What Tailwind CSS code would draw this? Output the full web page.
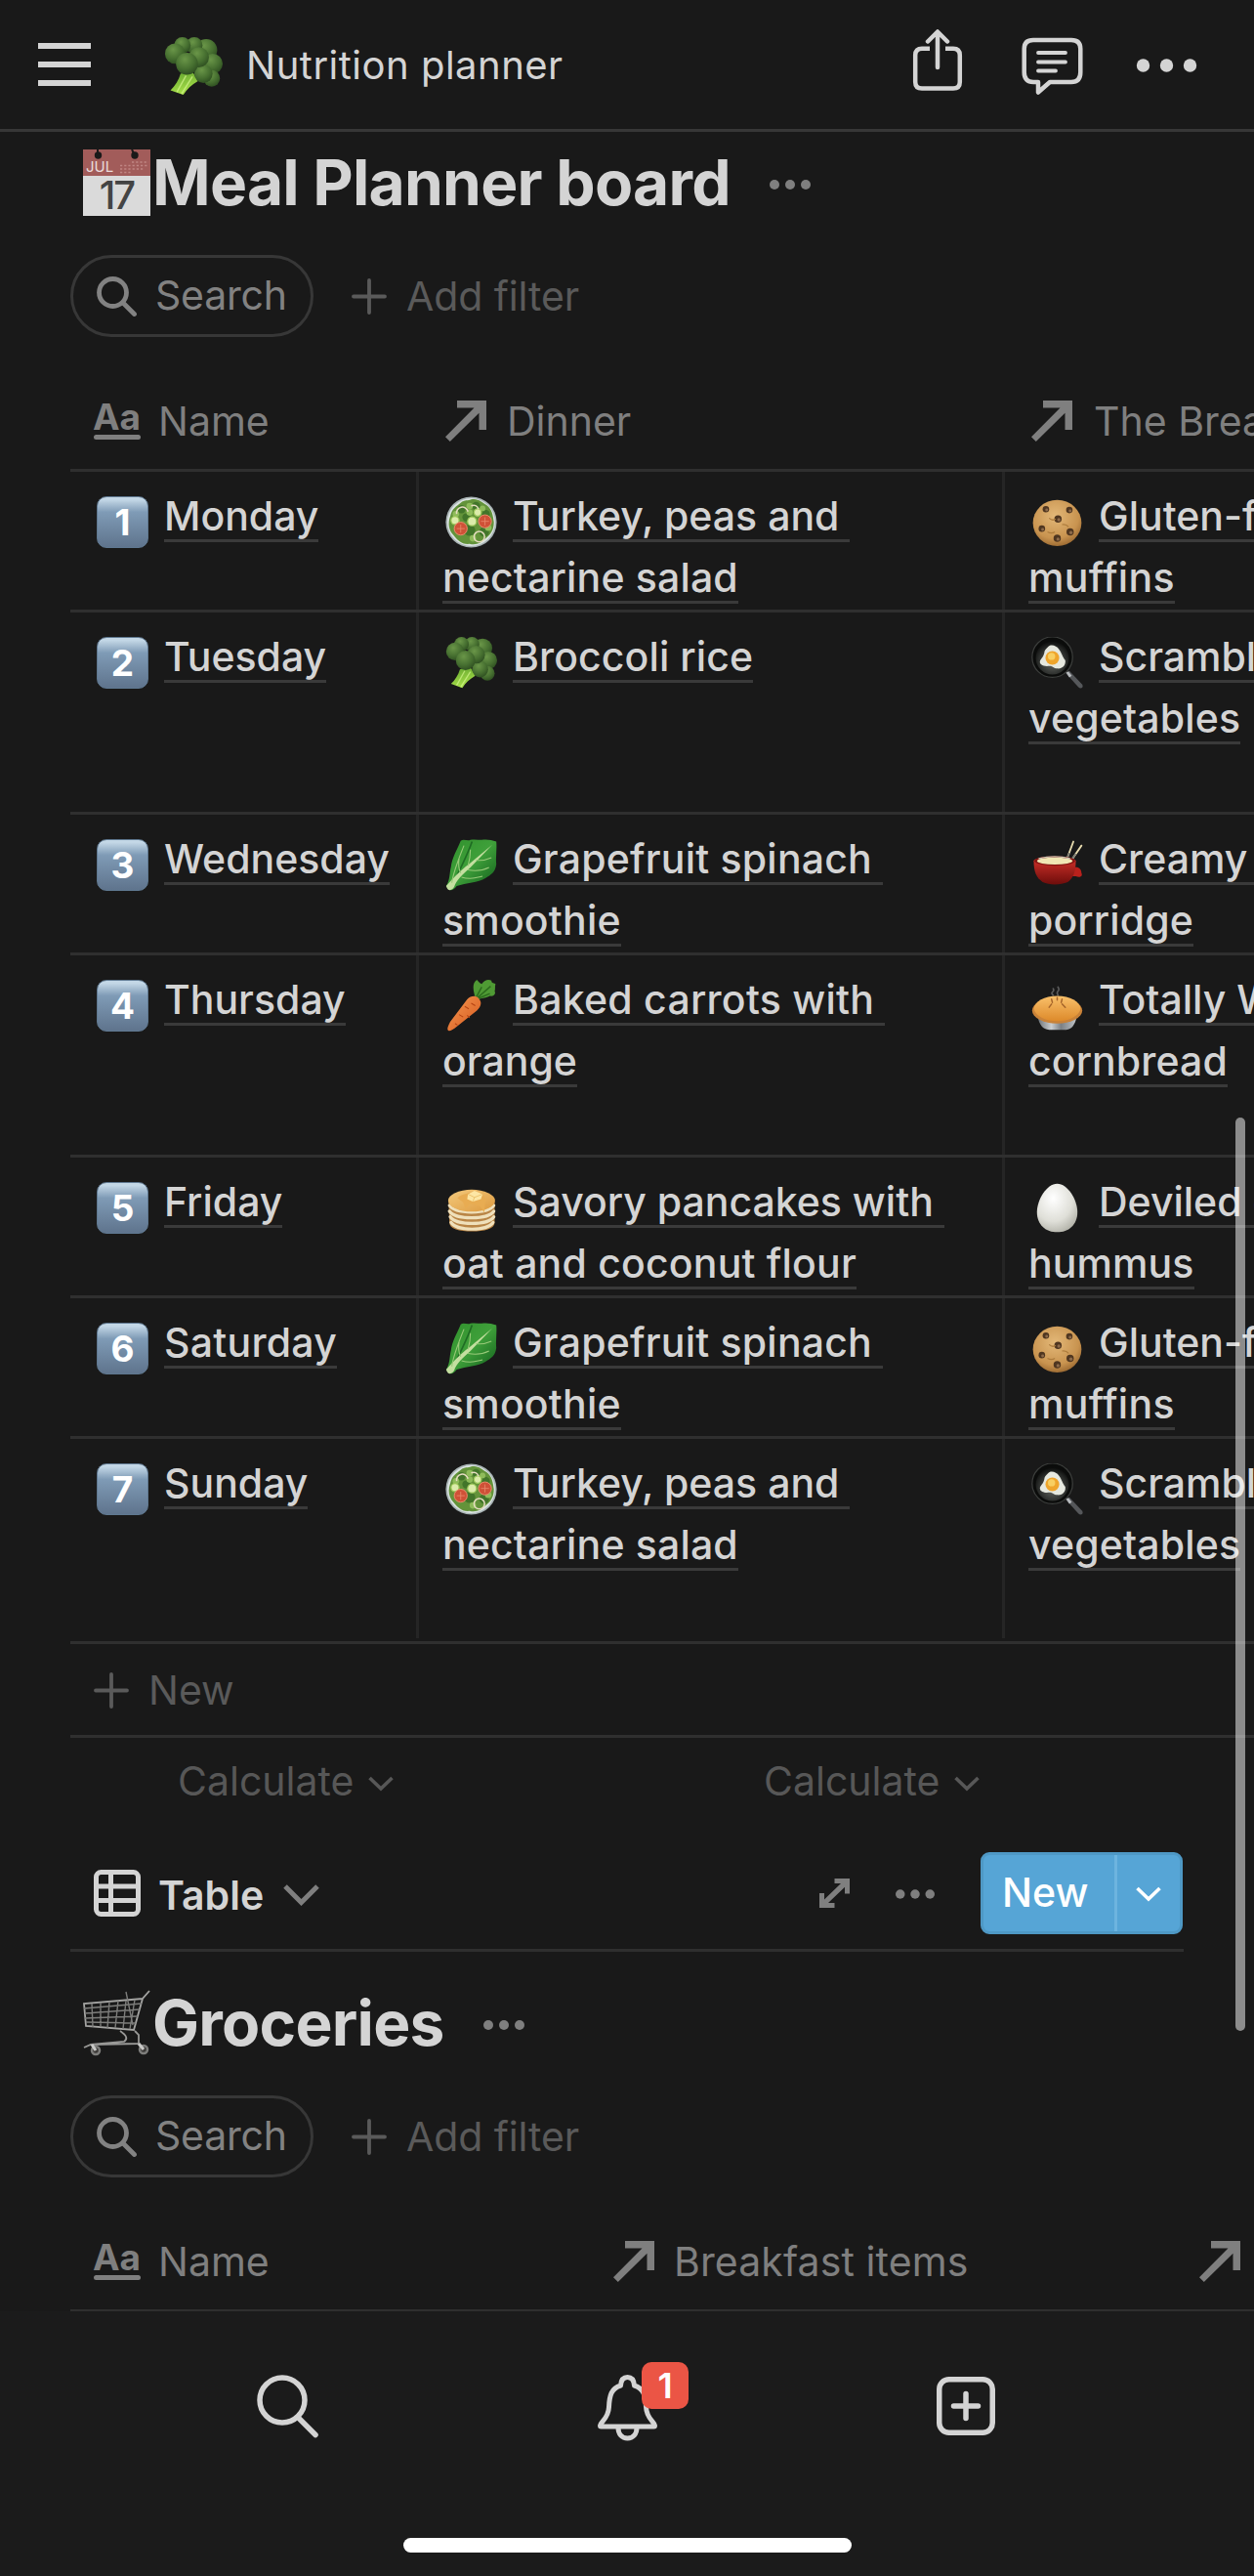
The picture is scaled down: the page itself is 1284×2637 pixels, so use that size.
<!DOCTYPE html>
<html lang="en">
<head>
<meta charset="utf-8">
<meta name="viewport" content="width=device-width, initial-scale=1">
<title>Nutrition planner</title>
<script src="https://cdn.jsdelivr.net/npm/@tailwindcss/browser@4"></script>
</head>
<body class="bg-[#191919] text-[#d4d4d4] font-['Inter',sans-serif]">

<!-- Shared icons -->
<svg class="absolute size-0" xmlns="http://www.w3.org/2000/svg">
  <defs>
    <linearGradient id="stalk" x1="0" y1="0" x2="0.3" y2="1"><stop offset="0" stop-color="#5b9e2a"/><stop offset="1" stop-color="#a8e04a"/></linearGradient>
    <radialGradient id="floret" cx="0.4" cy="0.3" r="0.75"><stop offset="0" stop-color="#6a9648"/><stop offset="0.6" stop-color="#466f30"/><stop offset="1" stop-color="#2d4d20"/></radialGradient>
    <linearGradient id="leaf" x1="0" y1="0" x2="1" y2="1"><stop offset="0" stop-color="#2f8f2c"/><stop offset="0.5" stop-color="#3fa03a"/><stop offset="1" stop-color="#0e5a1a"/></linearGradient>
    <linearGradient id="carrotBody" x1="0" y1="0" x2="1" y2="1"><stop offset="0" stop-color="#f79a52"/><stop offset="1" stop-color="#d4561c"/></linearGradient>
    <radialGradient id="cookieBody" cx="0.45" cy="0.35" r="0.7"><stop offset="0" stop-color="#e3b878"/><stop offset="0.7" stop-color="#c8934f"/><stop offset="1" stop-color="#93622c"/></radialGradient>
    <radialGradient id="eggBody" cx="0.4" cy="0.3" r="0.8"><stop offset="0" stop-color="#ffffff"/><stop offset="0.6" stop-color="#dfdfd8"/><stop offset="1" stop-color="#a9a99f"/></radialGradient>
    <radialGradient id="panBody" cx="0.5" cy="0.6" r="0.6"><stop offset="0" stop-color="#6a6d68"/><stop offset="0.7" stop-color="#2b2d2b"/><stop offset="1" stop-color="#0c0d0c"/></radialGradient>
    <linearGradient id="potBody" x1="0" y1="0" x2="0" y2="1"><stop offset="0" stop-color="#d5332b"/><stop offset="1" stop-color="#6d0d0b"/></linearGradient>
    <linearGradient id="pieTop" x1="0" y1="0" x2="0" y2="1"><stop offset="0" stop-color="#f9c06a"/><stop offset="1" stop-color="#dd8a2b"/></linearGradient>
    <linearGradient id="tin" x1="0" y1="0" x2="1" y2="0"><stop offset="0" stop-color="#6d7276"/><stop offset="0.35" stop-color="#c9cdd0"/><stop offset="0.6" stop-color="#7b8085"/><stop offset="1" stop-color="#c0c4c7"/></linearGradient>
    <linearGradient id="cake" x1="0" y1="0" x2="1" y2="1"><stop offset="0" stop-color="#f3c97c"/><stop offset="1" stop-color="#dd9a3f"/></linearGradient>
  </defs>

  <symbol id="broccoli" viewBox="0 0 64 64">
    <path d="M18 40 L30 36 L37 48 C30 52 25 57 21 63 L7 58 C12 53 16 47 18 40Z" fill="url(#stalk)"/>
    <path d="M24 42 L14 60 M31 43 L19 62" stroke="#d3f58c" stroke-width="1.6" fill="none" opacity=".7"/>
    <g fill="url(#floret)">
      <circle cx="46" cy="14" r="12"/><circle cx="33" cy="9" r="9"/><circle cx="20" cy="9" r="9"/><circle cx="12" cy="18" r="11"/>
      <circle cx="53" cy="29" r="11"/><circle cx="52" cy="45" r="9"/><circle cx="43" cy="40" r="10"/><circle cx="38" cy="22" r="11"/><circle cx="25" cy="29" r="12"/>
    </g>
  </symbol>

  <symbol id="salad" viewBox="0 0 64 64">
    <circle cx="32" cy="32" r="31.5" fill="#a9b4b5"/><circle cx="32" cy="32" r="29.500" fill="#dbe3e2"/>
    <path d="M32 4 C40 2 46 8 51 11 C58 16 59 25 60 32 C60 42 56 47 50 52 C44 58 38 61 30 59 C20 60 15 54 10 48 C4 42 3 33 6 25 C8 15 14 12 19 8 C24 4 28 6 32 4Z" fill="#63933a"/>
    <g fill="#42752a"><circle cx="20" cy="16" r="5"/><circle cx="38" cy="12" r="5"/><circle cx="50" cy="22" r="5"/><circle cx="30" cy="42" r="7"/><circle cx="48" cy="44" r="6"/><circle cx="26" cy="26" r="5"/></g>
    <g fill="#8fbc5b"><circle cx="30" cy="12" r="4"/><circle cx="46" cy="15" r="3.500"/><circle cx="13" cy="22" r="4"/><circle cx="34" cy="52" r="4"/><circle cx="53" cy="39" r="4"/><circle cx="30" cy="20" r="4"/></g>
    <g fill="#dcecab" stroke="#9cc75a" stroke-width="1.500"><circle cx="12" cy="30" r="5"/><circle cx="33" cy="31" r="5.500"/><circle cx="40" cy="20" r="4.500"/></g>
    <g fill="#cf5137" stroke="#e98a6c" stroke-width="1.200"><circle cx="19" cy="40" r="8"/><circle cx="49" cy="31" r="8"/></g>
    <path d="M19 35v10M14 40h10M49 26v10M44 31h10" stroke="#e98a6c" stroke-width="1"/>
    <g fill="none" stroke="#e6dcc0" stroke-width="1.800"><circle cx="42" cy="50" r="6.500"/><path d="M14 22a7 7 0 0 1 14-3M32 12a6 6 0 0 1 9 4"/></g>
  </symbol>

  <symbol id="lettuce" viewBox="0 0 64 64">
    <path d="M1 58 C6 50 5 42 7 34 C8 24 14 14 19 2 C23 -1 27 3 31 1 C36 0 40 1 45 1 C51 0 57 1 63 3 C64 13 62 22 63 31 C62 41 56 44 50 48 C40 54 26 54 14 58 C11 62 7 65 4 62Z" fill="url(#leaf)"/>
    <path d="M33 3 C29 15 21 32 9 56" stroke="#0d4d18" stroke-width="2" fill="none" opacity=".6"/>
    <path d="M1 58 C9 49 19 38 29 31 L58 7 L31 35 C22 43 13 51 11 59 C8 64 3 65 1 58Z" fill="#c4dfa0"/>
    <path d="M8 54 C10 40 16 26 23 8 M19 42 C16 36 16 30 17 24 M28 33 C30 26 31 20 31 13 M38 26 C44 27 50 26 57 23 M28 38 C38 40 46 39 54 35 M20 47 C30 50 38 48 46 46" stroke="#98c978" stroke-width="1.300" fill="none"/>
  </symbol>

  <symbol id="carrot" viewBox="0 0 64 64">
    <path d="M37 22 C34 12 33 4 39 0 C42 3 43 5 45 5 C49 0 53 -1 57 1 C57 4 59 4 62 5 C61 9 62 12 61 14 C63 18 59 21 55 20 C50 23 46 22 42 24Z" fill="#4f9a34"/>
    <path d="M38 22 L45 9 M40 22 L56 8 M41 23 L55 17" stroke="#2c6b1d" stroke-width="1.800" fill="none"/>
    <path d="M27 24 C32 19 39 19 42 24 C46 29 43 34 39 38 L14 58 C9 62 4 65 3 62 C2 60 4 56 6 52Z" fill="url(#carrotBody)"/>
    <path d="M24 33l5 3M17 43l5 3M30 47l-3-3M37 32l-5-3M12 54l3 2" stroke="#b64413" stroke-width="1.300" fill="none"/>
  </symbol>

  <symbol id="pancakes" viewBox="0 0 64 64">
    <path d="M4 24 H61 V50 C61 58 48 61 33 61 C17 61 5 58 5 50Z" fill="#b98546"/>
    <g fill="none" stroke="#efe0bb" stroke-width="3.800" stroke-linecap="round"><path d="M5 29 C12 40 53 40 60 29"/><path d="M5 36 C12 47 53 47 60 36"/><path d="M6 43 C13 54 53 54 60 43"/><path d="M7 50 C14 61 52 61 59 50"/></g>
    <ellipse cx="32.500" cy="23" rx="29" ry="13.500" fill="url(#cake)"/>
    <path d="M15 20 C20 14 25 16 30 13 L44 14 C48 18 52 22 49 26 L48 38 L43 30 L31 27 L25 33 L22 25Z" fill="#e8ac52"/>
    <path d="M28 15 L36 11 L46 15 L44 21 L34 24 L27 21Z" fill="#fde6a4"/><path d="M28 15 L36 19 L46 15 M36 19 L34 24" stroke="#e9bd64" stroke-width="1" fill="none"/>
  </symbol>

  <symbol id="cookie" viewBox="0 0 64 64">
    <ellipse cx="32" cy="33" rx="30" ry="28.500" fill="url(#cookieBody)"/>
    <g fill="#4f3620"><circle cx="18" cy="16" r="4"/><circle cx="47" cy="17" r="4"/><circle cx="33" cy="28" r="4.500"/><circle cx="13" cy="40" r="4"/><circle cx="48" cy="44" r="4.500"/><circle cx="32" cy="52" r="4.500"/></g>
    <g fill="#8d6a4a"><circle cx="19" cy="17" r="1.800"/><circle cx="48" cy="18" r="1.800"/><circle cx="34" cy="29" r="2"/><circle cx="14" cy="41" r="1.800"/><circle cx="49" cy="45" r="2"/><circle cx="33" cy="53" r="2"/></g>
    <path d="M22 27q4 4 8 1M38 35q5-1 8 3M20 44q5 3 9 0" stroke="#ad7c3d" stroke-width="1.500" fill="none"/>
  </symbol>

  <symbol id="pan" viewBox="0 0 64 64">
    <path d="M42 44 L47 42 L63 59 C65 63 61 65 58 62 Z" fill="#55575a"/><path d="M43 44l3-1 4 5-3 2z" fill="#b9bcbf"/>
    <circle cx="26" cy="25" r="25" fill="#0b0c0b" stroke="#3c3e3c" stroke-width="1.500"/><circle cx="26" cy="26" r="20.500" fill="url(#panBody)"/>
    <path d="M20 13 C24 8 31 11 34 15 C38 20 38 24 42 29 C43 36 37 40 32 39 C27 39 26 35 22 36 C15 37 9 34 11 29 C14 25 15 24 16 20 C16 17 18 15 20 13Z" fill="#e6e8df"/>
    <circle cx="26" cy="26" r="8.500" fill="#efa52c"/><circle cx="25" cy="24" r="4.500" fill="#f8cf62"/>
  </symbol>

  <symbol id="fondue" viewBox="0 0 64 64">
    <path d="M42 30 L52 3 M47 30 L62 8" stroke="#e8dcae" stroke-width="2.200" stroke-linecap="round"/><path d="M42 29 L47 17 M47 29 L55 18" stroke="#7b7b74" stroke-width="2"/>
    <path d="M50 37 C56 32 62 36 62 42 C64 46 60 48 55 46 L47 46Z" fill="#b9211c"/>
    <path d="M3 27 C3 20 54 20 55 27 C55 42 51 49 45 53 C36 57 22 57 14 53 C6 48 3 40 3 27Z" fill="url(#potBody)"/>
    <ellipse cx="29" cy="27" rx="25" ry="6" fill="#851512"/><ellipse cx="29" cy="27" rx="22" ry="4.500" fill="#f1e7b4"/><path d="M9 24 Q29 19 48 24" stroke="#c9c3b0" stroke-width="1.500" fill="none"/>
  </symbol>

  <symbol id="pie" viewBox="0 0 64 64">
    <path d="M27 19 C22 15 30 15 27 11 M33 19 C29 13 37 15 33 9" stroke="#6c6c6c" stroke-width="2" fill="none" stroke-linecap="round" opacity=".8"/>
    <path d="M8 46 H56 C54 56 50 61 43 62 H22 C14 61 10 56 8 46Z" fill="url(#tin)"/>
    <ellipse cx="32" cy="38" rx="31" ry="16" fill="#c98238"/>
    <path d="M3 36 C4 27 16 20 32 20 C48 20 60 27 61 36 C58 46 46 51 32 51 C18 51 6 46 3 36Z" fill="url(#pieTop)"/>
    <path d="M25 24l1 4M38 24l-1 4M22 34l3-4M42 34l-4-4M32 22v3" stroke="#a5642a" stroke-width="1.800" stroke-linecap="round"/>
  </symbol>

  <symbol id="egg" viewBox="0 0 64 64">
    <path d="M32 2 C45 2 57 22 57 37 C57 53 46 62 32 62 C18 62 7 53 7 37 C7 22 19 2 32 2Z" fill="url(#eggBody)"/>
  </symbol>

  <symbol id="relation" viewBox="0 0 42 42">
    <path d="M12 0 H42 V30 H34.500 V12.800 L4.800 42 L0 37.200 L29.500 7.500 H12Z" fill="currentColor"/>
  </symbol>
  <symbol id="chevron" viewBox="0 0 26 16">
    <path d="M1.500 2 L13 13 L24.500 2" fill="none" stroke="currentColor" stroke-width="3.600"/>
  </symbol>
  <symbol id="plus" viewBox="0 0 36 37">
    <path d="M18 2v33M2 18.500h32" stroke="currentColor" stroke-width="3.800" stroke-linecap="round"/>
  </symbol>
  <symbol id="dots" viewBox="0 0 42 10">
    <g fill="currentColor"><circle cx="5" cy="5" r="5"/><circle cx="21" cy="5" r="5"/><circle cx="37" cy="5" r="5"/></g>
  </symbol>
  <symbol id="lens" viewBox="0 0 41 41">
    <g fill="none" stroke="currentColor" stroke-width="4.800" stroke-linecap="round"><circle cx="16.500" cy="16.500" r="14"/><path d="M27 27 L38.500 38.500"/></g>
  </symbol>
</svg>

<div class="relative flex h-[2637px] w-[1284px] flex-col overflow-hidden">

  <!-- Top bar -->
  <header class="flex h-[135px] shrink-0 items-center border-b-[3px] border-[#373737] pl-[39px] pr-[58px]">
    <div class="flex w-[54px] flex-col gap-[13px]">
      <div class="h-1.5 bg-[#d4d4d4]"></div><div class="h-1.5 bg-[#d4d4d4]"></div><div class="h-1.5 bg-[#d4d4d4]"></div>
    </div>
    <svg class="ml-[75px] mt-1 size-[60px]"><use href="#broccoli"/></svg>
    <h1 class="ml-6 mt-0.5 text-[40px] leading-none tracking-[0.5px]">Nutrition planner</h1>
    <div class="ml-auto flex items-center">
      <svg class="mb-[9px] h-[64px] w-[52px]" viewBox="0 0 52 64" fill="none" stroke="currentColor" stroke-width="4.500">
        <path d="M18 19.700 H10 Q3.200 19.700 3.200 26.500 V54 Q3.200 60.500 10 60.500 H42 Q48.800 60.500 48.800 54 V26.500 Q48.800 19.700 42 19.700 H34"/>
        <path d="M26 39 V3 M16 12.500 L26 2.500 L36 12.500" stroke-linecap="round" stroke-linejoin="round"/>
      </svg>
      <svg class="ml-[60px] mt-1 h-[60px] w-[63px]" viewBox="0 0 63 60" fill="none" stroke="currentColor" stroke-width="4.500" stroke-linejoin="round">
        <path d="M12 3 H51 Q60.300 3 60.300 12 V36 Q60.300 46 51 46 H29 L17 56.500 V46 H12 Q2.700 46 2.700 36 V12 Q2.700 3 12 3Z"/>
        <path d="M17 16h28M17 25.500h28M17 34.500h18" stroke-width="3.800" stroke-linecap="round"/>
      </svg>
      <svg class="ml-[54px] mt-0.5 h-[14px] w-[63px]" viewBox="0 0 63 14" fill="currentColor"><circle cx="7.500" cy="7" r="6.700"/><circle cx="31.500" cy="7" r="6.700"/><circle cx="55.500" cy="7" r="6.700"/></svg>
    </div>
  </header>

  <!-- Meal planner -->
  <div class="flex h-[104px] shrink-0 items-center pl-[85px]">
    <svg class="h-[68px] w-[69px]" viewBox="0 0 69 68">
      <rect width="69" height="68" fill="#dadada"/><rect width="69" height="27" fill="#a25c5a"/>
      <path d="M15 0v6M50 0l3 6" stroke="#191919" stroke-width="2"/><circle cx="15.500" cy="6" r="3.700" fill="#191919"/><circle cx="53" cy="6" r="3.700" fill="#191919"/>
      <g stroke="#c08583" stroke-width="1.600" stroke-dasharray="2.200 2"><path d="M50 13h17M38 16.500h28M38 20h24M38 23.500h12"/></g>
      <text x="3" y="23.300" font-size="15" font-family="Inter" fill="#eadcdc">JUL</text>
      <text x="34.500" y="61" font-size="40" font-family="Inter" font-weight="500" letter-spacing="-2" fill="#444" text-anchor="middle">17</text>
    </svg>
    <h2 class="ml-0.5 text-[64px] font-bold leading-none tracking-[-0.75px]">Meal Planner board</h2>
    <svg class="ml-10 mt-1 h-[10px] w-[42px] text-[#7f7f7f]"><use href="#dots"/></svg>
  </div>
  <div class="mt-[22px] flex h-[84px] shrink-0 items-center pl-[72px] text-[41px] leading-none">
    <div class="flex h-[84px] w-[249px] items-center rounded-full border-[3px] border-[#373737] pl-6 text-[#828282]">
      <svg class="size-[41px]"><use href="#lens"/></svg><span class="-mt-0.5 ml-[19px] tracking-[-0.2px]">Search</span>
    </div>
    <div class="flex items-center pl-[39px] text-[#5a5a5a]">
      <svg class="h-[37px] w-9"><use href="#plus"/></svg><span class="ml-5 tracking-[-0.1px]">Add filter</span>
    </div>
  </div>
  <div class="mt-[36px] ml-[72px] flex h-[102px] shrink-0 border-b-[3px] border-[#2f2f2f] text-[41px] leading-none text-[#7f7f7f]">
    <div class="flex w-[357px] shrink-0 items-center pl-6">
      <div class="mt-px flex w-12 flex-col gap-[4px]"><span class="-ml-px h-[29px] text-[37px] font-bold leading-[30px]">Aa</span><span class="h-[5px] rounded-full bg-[#7f7f7f]"></span></div>
      <span class="ml-[18px] mt-0.5">Name</span>
    </div>
    <div class="flex w-[600px] shrink-0 items-center pl-[27px]"><svg class="size-[42px]"><use href="#relation"/></svg><span class="ml-[21px] mt-0.5">Dinner</span></div>
    <div class="flex w-[600px] shrink-0 items-center pl-[27px]"><svg class="size-[42px]"><use href="#relation"/></svg><span class="ml-[22px] mt-0.5 whitespace-nowrap">The Breakfast</span></div>
  </div>

  <div class="ml-[72px] flex shrink-0 flex-col text-[41px] font-medium leading-[60px] [&_b]:h-[63px] [&_b]:whitespace-pre [&_b]:border-b-[3px] [&_b]:border-[#3a3a3a] [&_b]:pt-1.5 [&_b]:font-medium [&_i]:mr-4 [&_i]:mt-4 [&_i]:flex [&_i]:size-[53px] [&_i]:shrink-0 [&_i]:items-center [&_i]:justify-center [&_i]:rounded-[10px] [&_i]:border [&_i]:border-[#5f7890] [&_i]:bg-linear-to-b [&_i]:from-[#c3d7e6] [&_i]:from-5% [&_i]:via-[#7f9bb6] [&_i]:via-30% [&_i]:to-[#5f748d] [&_i]:text-[37px] [&_i]:font-bold [&_i]:not-italic [&_i]:text-white [&_p]:flex [&_p]:h-[63px] [&_section]:flex [&_section]:border-b-[3px] [&_section]:border-[#2f2f2f] [&_section>div]:shrink-0 [&_section>div]:pt-[9px] [&_svg]:ml-[3px] [&_svg]:mr-4 [&_svg]:mt-4 [&_svg]:size-[53px] [&_svg]:shrink-0">
    <section class="h-[144px]">
      <div class="w-[357px] border-r-[3px] border-[#252525] pl-[27px]"><p><i>1</i><b>Monday</b></p></div>
      <div class="w-[600px] border-r-[3px] border-[#252525] pl-6"><p><svg><use href="#salad"/></svg><b>Turkey, peas and </b></p><p><b class="tracking-[0.15px]">nectarine salad</b></p></div>
      <div class="w-[600px] pl-6"><p><svg><use href="#cookie"/></svg><b>Gluten-free pumpkin</b></p><p><b class="tracking-[0.3px]">muffins</b></p></div>
    </section>
    <section class="h-[207px]">
      <div class="w-[357px] border-r-[3px] border-[#252525] pl-[27px]"><p><i>2</i><b>Tuesday</b></p></div>
      <div class="w-[600px] border-r-[3px] border-[#252525] pl-6"><p><svg><use href="#broccoli"/></svg><b class="tracking-[0.1px]">Broccoli rice</b></p></div>
      <div class="w-[600px] pl-6"><p><svg><use href="#pan"/></svg><b>Scrambled eggs with</b></p><p><b class="tracking-[0.15px]">vegetables</b></p></div>
    </section>
    <section class="h-[144px]">
      <div class="w-[357px] border-r-[3px] border-[#252525] pl-[27px]"><p><i>3</i><b>Wednesday</b></p></div>
      <div class="w-[600px] border-r-[3px] border-[#252525] pl-6"><p><svg><use href="#lettuce"/></svg><b class="tracking-[0.2px]">Grapefruit spinach </b></p><p><b class="tracking-[0.2px]">smoothie</b></p></div>
      <div class="w-[600px] pl-6"><p><svg><use href="#fondue"/></svg><b>Creamy coconut</b></p><p><b class="tracking-[0.1px]">porridge</b></p></div>
    </section>
    <section class="h-[207px]">
      <div class="w-[357px] border-r-[3px] border-[#252525] pl-[27px]"><p><i>4</i><b>Thursday</b></p></div>
      <div class="w-[600px] border-r-[3px] border-[#252525] pl-6"><p><svg><use href="#carrot"/></svg><b class="tracking-[0.25px]">Baked carrots with </b></p><p><b>orange</b></p></div>
      <div class="w-[600px] pl-6"><p><svg><use href="#pie"/></svg><b>Totally Wholesome</b></p><p><b class="tracking-[0.1px]">cornbread</b></p></div>
    </section>
    <section class="h-[144px]">
      <div class="w-[357px] border-r-[3px] border-[#252525] pl-[27px]"><p><i>5</i><b>Friday</b></p></div>
      <div class="w-[600px] border-r-[3px] border-[#252525] pl-6"><p><svg><use href="#pancakes"/></svg><b>Savory pancakes with </b></p><p><b class="tracking-[0.2px]">oat and coconut flour</b></p></div>
      <div class="w-[600px] pl-6"><p><svg><use href="#egg"/></svg><b>Deviled eggs with</b></p><p><b class="tracking-[0.1px]">hummus</b></p></div>
    </section>
    <section class="h-[144px]">
      <div class="w-[357px] border-r-[3px] border-[#252525] pl-[27px]"><p><i>6</i><b class="tracking-[0.25px]">Saturday</b></p></div>
      <div class="w-[600px] border-r-[3px] border-[#252525] pl-6"><p><svg><use href="#lettuce"/></svg><b class="tracking-[0.2px]">Grapefruit spinach </b></p><p><b class="tracking-[0.2px]">smoothie</b></p></div>
      <div class="w-[600px] pl-6"><p><svg><use href="#cookie"/></svg><b>Gluten-free pumpkin</b></p><p><b class="tracking-[0.3px]">muffins</b></p></div>
    </section>
    <section class="h-[210px] pb-[3px]">
      <div class="w-[357px] border-r-[3px] border-[#252525] pl-[27px]"><p><i>7</i><b>Sunday</b></p></div>
      <div class="w-[600px] border-r-[3px] border-[#252525] pl-6"><p><svg><use href="#salad"/></svg><b>Turkey, peas and </b></p><p><b class="tracking-[0.15px]">nectarine salad</b></p></div>
      <div class="w-[600px] pl-6"><p><svg><use href="#pan"/></svg><b>Scrambled eggs with</b></p><p><b class="tracking-[0.15px]">vegetables</b></p></div>
    </section>
  </div>

  <div class="ml-[72px] flex h-[96px] shrink-0 items-center border-b-[3px] border-[#2f2f2f] pl-6 text-[41px] leading-none text-[#5a5a5a]">
    <svg class="mt-0.5 h-[37px] w-9"><use href="#plus"/></svg><span class="ml-5 mt-0.5">New</span>
  </div>
  <div class="flex h-[88px] shrink-0 items-center pl-[182px] text-[41px] leading-none text-[#575757]">
    <div class="flex w-[600px] shrink-0 items-center"><span>Calculate</span><svg class="ml-[15px] mt-1.5 h-4 w-[26px]"><use href="#chevron"/></svg></div>
    <div class="flex shrink-0 items-center"><span>Calculate</span><svg class="ml-[15px] mt-1.5 h-4 w-[26px]"><use href="#chevron"/></svg></div>
  </div>

  <!-- View switcher -->
  <div class="ml-[72px] mt-[29px] flex h-[102px] w-[1140px] shrink-0 items-center border-b-[3px] border-[#2f2f2f] pb-[15px] pl-6 pr-px text-[41px] leading-none">
    <svg class="size-12" viewBox="0 0 48 48" fill="none" stroke="currentColor" stroke-width="5">
      <rect x="2.500" y="2.500" width="43" height="43" rx="5"/><path d="M3 17h42M3 31.500h42M17.500 3v42"/>
    </svg>
    <span class="ml-[18px] mt-1 font-semibold">Table</span>
    <svg class="ml-[20px] mt-1 h-[22px] w-[37px] text-[#7f7f7f]" viewBox="0 0 37 22"><path d="M2 2 L18.500 18.500 L35 2" fill="none" stroke="currentColor" stroke-width="5"/></svg>
    <div class="ml-auto flex items-center">
      <svg class="h-[30px] w-[31px] text-[#7f7f7f]" viewBox="0 0 31 30" fill="currentColor"><path d="M15.500 0H31V15.500H26V8.800L9 25H15.500V30H0V15H5V21.500L22 5H15.500Z"/></svg>
      <svg class="ml-[47px] mt-0.5 h-[10px] w-10 text-[#7f7f7f]"><use href="#dots"/></svg>
      <div class="ml-[47px] flex h-[84px] w-[207px] items-center overflow-hidden rounded-[9px] border-[3px] border-[#4e98c5] bg-[#56a5d6] font-medium text-white">
        <span class="-mt-0.5 w-[134px] pl-[19px]">New</span>
        <span class="h-[84px] w-[3px] bg-[#6db4df]"></span>
        <svg class="ml-[19px] mt-0.5 h-4 w-[26px]"><use href="#chevron"/></svg>
      </div>
    </div>
  </div>

  <!-- Groceries -->
  <div class="mt-[21px] flex h-[104px] shrink-0 items-center pl-[85px]">
    <svg class="h-[68px] w-[69px]" viewBox="0 0 69 68" fill="none" stroke="#7d7d7b" stroke-width="1.400">
      <path d="M68 1 L61 9 L52 41 L3 37 L1 14 L61 9" stroke="#a4a4a2" stroke-width="1.800"/>
      <path d="M1 19 L60 14 M2 24 L58 20 M2 29 L56 27 M3 33 L54 34 M9 14 L10 38 M18 13 L18 38 M27 12 L25 39 M36 11 L33 39 M44 11 L41 40 M53 10 L48 40 M44 2 L51 36"/>
      <path d="M38 42 C45 47 46 50 42 53 L8 56 L1 59 M53 42 L57 46 V56 M9 56 L57 55" stroke="#999997" stroke-width="1.800"/>
      <circle cx="13" cy="62" r="4" fill="#3c3a38" stroke-width="2.500"/><circle cx="62" cy="61" r="4" fill="#3c3a38" stroke-width="2.500"/><path d="M9 56l4 6M57 55l5 6" stroke="#c9c9c7" stroke-width="3"/>
    </svg>
    <h2 class="ml-0.5 text-[64px] font-bold leading-none tracking-[-0.75px]">Groceries</h2>
    <svg class="ml-10 mt-1 h-[10px] w-[42px] text-[#7f7f7f]"><use href="#dots"/></svg>
  </div>
  <div class="mt-[22px] flex h-[84px] shrink-0 items-center pl-[72px] text-[41px] leading-none">
    <div class="flex h-[84px] w-[249px] items-center rounded-full border-[3px] border-[#373737] pl-6 text-[#828282]">
      <svg class="size-[41px]"><use href="#lens"/></svg><span class="-mt-0.5 ml-[19px] tracking-[-0.2px]">Search</span>
    </div>
    <div class="flex items-center pl-[39px] text-[#5a5a5a]">
      <svg class="h-[37px] w-9"><use href="#plus"/></svg><span class="ml-5 tracking-[-0.1px]">Add filter</span>
    </div>
  </div>
  <div class="mt-[36px] ml-[72px] flex h-[101px] shrink-0 border-b-2 border-[#2f2f2f] text-[41px] leading-none text-[#7f7f7f]">
    <div class="flex w-[528px] shrink-0 items-center pl-6">
      <div class="mt-px flex w-12 flex-col gap-[4px]"><span class="-ml-px h-[29px] text-[37px] font-bold leading-[30px]">Aa</span><span class="h-[5px] rounded-full bg-[#7f7f7f]"></span></div>
      <span class="ml-[18px] mt-0.5">Name</span>
    </div>
    <div class="flex w-[600px] shrink-0 items-center pl-[28px]"><svg class="size-[42px]"><use href="#relation"/></svg><span class="ml-5 mt-0.5 tracking-[0.1px]">Breakfast items</span></div>
    <div class="flex w-[300px] shrink-0 items-center pl-[28px]"><svg class="size-[42px]"><use href="#relation"/></svg></div>
  </div>

  <!-- Bottom navigation -->
  <nav class="flex min-h-0 flex-1 flex-col items-center bg-[#1b1b1b]">
    <div class="flex w-full items-start pl-[262px] pt-[65px]">
      <svg class="size-[65px]" viewBox="0 0 65 65" fill="none" stroke="currentColor" stroke-width="5.500" stroke-linecap="round"><circle cx="27" cy="26" r="23"/><path d="M43.500 44 L61 61.500"/></svg>
      <div class="relative ml-[284px]">
        <svg class="h-[68px] w-[63px]" viewBox="0 0 63 68" fill="none" stroke="currentColor" stroke-width="5" stroke-linejoin="round" stroke-linecap="round">
          <path d="M3.500 52 C4 48 12 45 12.500 33 C13 21 15 14 24.500 11 C25 4.500 28 2.500 31.500 2.500 C35 2.500 38 4.500 38.500 11 C48 14 50 21 50.500 33 C51 45 59 48 59.500 52 Q59.500 53 58.500 53 H4.500 Q3.500 53 3.500 52Z"/>
          <path d="M22 54 C22 61 26 65 31.500 65 C37 65 41 61 41 54" stroke-linecap="butt"/>
        </svg>
        <span class="absolute -top-[13px] left-[46px] flex h-12 w-12 items-center justify-center rounded-[10px] bg-[#eb5545] text-[36px] font-semibold leading-none text-white">1</span>
      </div>
      <svg class="ml-[285px] mt-[2px] size-[60px]" viewBox="0 0 60 60" fill="none" stroke="currentColor" stroke-width="5.500" stroke-linecap="round"><rect x="2.750" y="2.750" width="54.500" height="54.500" rx="10"/><path d="M30 17.500v25M17.500 30h25"/></svg>
    </div>
    <div class="mb-6 mt-auto h-[15px] w-[459px] rounded-full bg-white"></div>
  </nav>

  <!-- Scroll indicator -->
  <div class="absolute left-[1265px] top-[1144px] h-[935px] w-[10px] rounded-full bg-white/50"></div>
</div>
</body>
</html>
